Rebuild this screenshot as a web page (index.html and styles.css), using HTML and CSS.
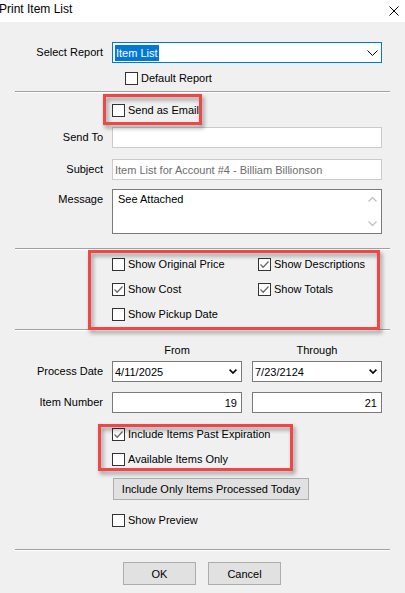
FILE: index.html
```html
<!DOCTYPE html>
<html>
<head>
<title>Print Item List</title>
<link rel="stylesheet" href="styles.css">
</head>
<body>
<div class="titlebar">
    <span class="title">Print Item List</span>
    <svg class="close" width="10" height="10" viewBox="0 0 10 10"><path d="M0.5 0.5L9.5 9.5M9.5 0.5L0.5 9.5" stroke="#000" stroke-width="1"/></svg>
</div>

<div class="dialog">
    <!-- report picker -->
    <div class="row report-row">
        <span class="lbl">Select Report</span>
        <div class="field combo active">
            <span class="picked">Item List</span>
            <svg class="arrow" width="11" height="6" viewBox="0 0 11 6"><path d="M0.5 0.5L5.5 5.5L10.5 0.5" fill="none" stroke="#000" stroke-width="1"/></svg>
        </div>
    </div>
    <div class="check default-check"><span class="box"></span>Default Report</div>

    <div class="sep sep-1"></div>

    <!-- email -->
    <div class="check email-check mark mark-email"><span class="box"></span>Send as Email</div>
    <div class="row sendto-row">
        <span class="lbl">Send To</span>
        <div class="field soft"></div>
    </div>
    <div class="row subject-row">
        <span class="lbl">Subject</span>
        <div class="field soft dim">Item List for Account #4 - Billiam Billionson</div>
    </div>
    <div class="row memo-row">
        <span class="lbl">Message</span>
        <div class="field memo">
            <span class="memo-text">See Attached</span>
            <div class="scroll">
                <svg width="9" height="5" viewBox="0 0 9 5"><path d="M0.5 4.5L4.5 0.5L8.5 4.5" fill="none" stroke="#c2c2c2" stroke-width="1.4"/></svg>
                <svg width="9" height="5" viewBox="0 0 9 5"><path d="M0.5 0.5L4.5 4.5L8.5 0.5" fill="none" stroke="#c2c2c2" stroke-width="1.4"/></svg>
            </div>
        </div>
    </div>

    <div class="sep sep-2"></div>

    <!-- columns to show -->
    <div class="opts mark mark-opts">
        <div class="check"><span class="box"></span>Show Original Price</div>
        <div class="check"><span class="box"><svg class="tick" width="11" height="11" viewBox="0 0 11 11"><path d="M1.5 5.5L4.2 8.2L9.5 2.5" fill="none" stroke="#6a6a6a" stroke-width="1.3"/></svg></span>Show Descriptions</div>
        <div class="check"><span class="box"><svg class="tick" width="11" height="11" viewBox="0 0 11 11"><path d="M1.5 5.5L4.2 8.2L9.5 2.5" fill="none" stroke="#6a6a6a" stroke-width="1.3"/></svg></span>Show Cost</div>
        <div class="check"><span class="box"><svg class="tick" width="11" height="11" viewBox="0 0 11 11"><path d="M1.5 5.5L4.2 8.2L9.5 2.5" fill="none" stroke="#6a6a6a" stroke-width="1.3"/></svg></span>Show Totals</div>
        <div class="check"><span class="box"></span>Show Pickup Date</div>
    </div>

    <div class="sep sep-3"></div>

    <!-- range -->
    <div class="row range-head">
        <span></span>
        <div class="pair"><span>From</span><span>Through</span></div>
    </div>
    <div class="row date-row">
        <span class="lbl">Process Date</span>
        <div class="pair">
            <div class="field combo">4/11/2025<svg class="arrow" width="8" height="5" viewBox="0 0 8 5"><path d="M0.6 0.6L4 4L7.4 0.6" fill="none" stroke="#000" stroke-width="1.6"/></svg></div>
            <div class="field combo">7/23/2124<svg class="arrow" width="8" height="5" viewBox="0 0 8 5"><path d="M0.6 0.6L4 4L7.4 0.6" fill="none" stroke="#000" stroke-width="1.6"/></svg></div>
        </div>
    </div>
    <div class="row num-row">
        <span class="lbl">Item Number</span>
        <div class="pair">
            <div class="field num">19</div>
            <div class="field num">21</div>
        </div>
    </div>

    <div class="filters mark mark-filters">
        <div class="check"><span class="box"><svg class="tick" width="11" height="11" viewBox="0 0 11 11"><path d="M1.5 5.5L4.2 8.2L9.5 2.5" fill="none" stroke="#6a6a6a" stroke-width="1.3"/></svg></span>Include Items Past Expiration</div>
        <div class="check"><span class="box"></span>Available Items Only</div>
    </div>

    <div class="btn today-btn">Include Only Items Processed Today</div>

    <div class="check preview-check"><span class="box"></span>Show Preview</div>

    <div class="sep sep-4"></div>

    <div class="actions">
        <div class="btn">OK</div>
        <div class="btn">Cancel</div>
    </div>
</div>
</body>
</html>
```

FILE: styles.css
```css
html {
    background: #f0f0f0;
}
body {
    margin: 0;
    font-family: "Liberation Sans", Arial, sans-serif;
    font-size: 11px;
    color: #000;
}

/* window caption */
.titlebar {
    height: 22px;
    background: #fff;
    display: flex;
    justify-content: space-between;
    align-items: flex-start;
    padding-right: 6px;
}
.title {
    margin-left: -1px;
    font-size: 12px;
    line-height: 19px;
}
.close {
    margin-top: 6px;
}

.dialog {
    padding: 0 15px;
}

/* label + control rows */
.row {
    display: grid;
    grid-template-columns: 88px 270px;
    column-gap: 9px;
    align-items: center;
}
.lbl {
    text-align: right;
    line-height: 13px;
}
.pair {
    display: grid;
    grid-template-columns: 130px 130px;
    column-gap: 10px;
}

.field {
    height: 21px;
    box-sizing: border-box;
    background: #fff;
    border: 1px solid #7a7a7a;
    display: flex;
    align-items: center;
    padding: 0 3px 0 2px;
    white-space: nowrap;
}
.field.soft {
    border-color: #cbcbcb;
}
.field.dim {
    color: #6d6d6d;
}
.field.num {
    justify-content: flex-end;
    padding-right: 4px;
}
.combo {
    justify-content: space-between;
    padding-right: 4px;
}
.combo.active {
    border-color: #0078d7;
    padding-left: 2px;
    padding-right: 3px;
}
.picked {
    background: #0078d7;
    color: #fff;
    line-height: 16px;
    padding: 0 1px;
}

.memo {
    height: 45px;
    align-items: stretch;
    padding: 0 0 0 5px;
}
.memo-text {
    flex: 1;
    padding-top: 2px;
    line-height: 15px;
}
.scroll {
    width: 17px;
    display: flex;
    flex-direction: column;
    justify-content: space-between;
    align-items: center;
    padding: 7px 0;
}
.scroll svg {
    display: block;
}
.memo-row {
    align-items: start;
}
.memo-row .lbl {
    padding-top: 4px;
}

/* checkboxes */
.check {
    display: flex;
    align-items: center;
    gap: 3px;
    height: 13px;
    line-height: 13px;
    white-space: nowrap;
}
.box {
    width: 13px;
    height: 13px;
    box-sizing: border-box;
    border: 1px solid #333;
    background: #fff;
    flex: none;
}
.tick {
    display: block;
}

.sep {
    height: 1px;
    background: #a0a0a0;
    border-bottom: 1px solid #fff;
}

.btn {
    height: 22px;
    box-sizing: border-box;
    background: #e1e1e1;
    border: 1px solid #adadad;
    display: flex;
    align-items: center;
    justify-content: center;
}

/* vertical rhythm */
.report-row { margin-top: 20px; }
.default-check { margin: 9px 0 0 110px; }
.sep-1 { margin-top: 6px; }
.email-check { margin: 11px 0 0 97px; }
.sendto-row { margin-top: 10px; }
.subject-row { margin-top: 11px; }
.memo-row { margin-top: 9px; }
.sep-2 { margin-top: 14px; }
.opts {
    margin: 8px 0 0 97px;
    display: grid;
    grid-template-columns: 146px auto;
    row-gap: 12px;
}
.sep-3 { margin-top: 8px; }
.range-head { margin-top: 12px; }
.range-head .pair span {
    text-align: center;
    line-height: 14px;
}
.date-row { margin-top: 4px; }
.date-row .field { height: 21px; }
.num-row { margin-top: 10px; }
.filters {
    margin: 15px 0 0 97px;
    display: flex;
    flex-direction: column;
    gap: 12px;
}
.today-btn {
    margin: 12px 0 0 98px;
    width: 196px;
}
.preview-check { margin: 14px 0 0 97px; }
.sep-4 { margin-top: 22px; }
.actions {
    margin: 11px 0 0 108px;
    display: flex;
    gap: 12px;
}
.actions .btn {
    width: 73px;
    height: 23px;
}

/* red call-out frames drawn over groups */
.mark {
    position: relative;
}
.mark::after {
    content: "";
    position: absolute;
    box-sizing: border-box;
    border: 3px solid #ef4646;
    filter: drop-shadow(2px 3px 2px rgba(0, 0, 0, 0.4));
    pointer-events: none;
}
.mark-email::after {
    left: -9px;
    top: -10px;
    width: 99px;
    height: 31px;
}
.mark-opts::after {
    left: -24px;
    top: -8px;
    width: 292px;
    height: 80px;
}
.mark-filters::after {
    left: -14px;
    top: -4px;
    width: 195px;
    height: 47px;
}
```
